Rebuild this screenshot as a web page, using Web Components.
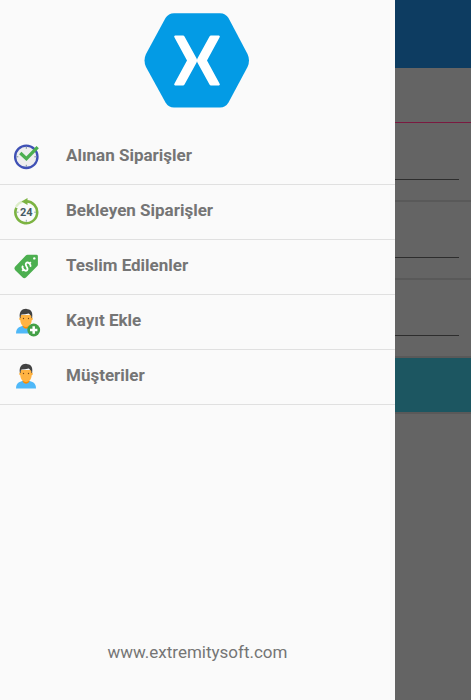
<!DOCTYPE html>
<html lang="tr">
<head>
<meta charset="utf-8">
<meta name="viewport" content="width=device-width, initial-scale=1">
<title>Siparişler</title>
<style>
  body { margin: 0; background: #646464; font-family: Roboto, "Liberation Sans", sans-serif; color: #757575; }
</style>
</head>
<body>
<app-shell>
  <order-page slot="page" inert></order-page>
  <nav-drawer slot="drawer">
    <brand-logo slot="header"></brand-logo>
    <drawer-item icon="clock">Alınan Siparişler</drawer-item>
    <drawer-item icon="day">Bekleyen Siparişler</drawer-item>
    <drawer-item icon="tag">Teslim Edilenler</drawer-item>
    <drawer-item icon="add">Kayıt Ekle</drawer-item>
    <drawer-item icon="person">Müşteriler</drawer-item>
    <site-link slot="footer">www.extremitysoft.com</site-link>
  </nav-drawer>
</app-shell>

<script>
const define = (name, html) => customElements.define(name, class extends HTMLElement {
  constructor() {
    super();
    this.attachShadow({ mode: "open" }).innerHTML = html;
  }
});

/* The drawer shares one grid cell with the dimmed page and leaves a strip of it free. */
define("app-shell", `
  <style>
    :host { display: grid; min-height: 100vh; }
    ::slotted(*) { grid-area: 1 / 1; }
    ::slotted([slot="drawer"]) { margin-right: 76px; z-index: 1; }
  </style>
  <slot name="page"></slot><slot name="drawer"></slot>`);

define("form-row", `
  <style>
    :host { display: flex; align-items: flex-end; box-sizing: border-box; height: 78px; padding: 0 12px 20px; border-bottom: 2px solid #595959; }
    input { flex: 1; min-width: 0; height: 36px; padding: 0; border: 0; border-bottom: 1px solid #2d2d2d; border-radius: 0; background: none; font: inherit; }
  </style>
  <input type="text" aria-label="Bilgi">`);

define("order-page", `
  <style>
    :host { display: block; background: #646464; }
    header { height: 68px; background: #0d3c61; }
    .tabs { height: 54px; border-bottom: 1px solid #7a1a40; margin-bottom: 1px; }
    button { display: block; width: 100%; height: 54px; border: 0; padding: 0; background: #1c5661; }
    .action { border-bottom: 2px solid #595959; }
  </style>
  <header></header>
  <div class="tabs"></div>
  <form-row></form-row><form-row></form-row><form-row></form-row>
  <div class="action"><button type="button" aria-label="Kaydet"></button></div>`);

define("nav-drawer", `
  <style>
    :host { display: flex; flex-direction: column; background: #fafafa; }
    header { display: flex; justify-content: center; padding: 12px 0 21px; }
    nav { flex: 1; }
    footer { display: flex; justify-content: center; padding: 36px 0; }
  </style>
  <header><slot name="header"></slot></header>
  <nav><slot></slot></nav>
  <footer><slot name="footer"></slot></footer>`);

define("brand-logo", `
  <style>:host, svg { display: block; }</style>
  <svg width="108" height="97" viewBox="0 0 108 97" aria-hidden="true">
    <path fill="#039be5" d="M30 1.300H76Q81.500 1.300 84.500 6L103.500 42Q106.500 48.500 103.500 55L84.500 90.500Q81.500 95.600 76 95.600H30Q24.500 95.600 21.500 90.500L2 55Q-1 48.500 2 42L21.500 6Q24.500 1.300 30 1.300Z"/>
    <path fill="#fff" d="M31 23.500H39Q40 23.500 40.500 24.500L52.600 46.500L53 47.700L53.400 46.500L65.500 24.500Q66 23.500 67 23.500H75Q76.500 24 75.500 25.500L63 48.500L75.500 71.500Q76.500 73 75 73.500H67Q66 73.500 65.500 72.500L53.400 50.500L53 49.300L52.600 50.500L40.500 72.500Q40 73.500 39 73.500H31Q29.500 73 30.500 71.500L43 48.500L30.500 25.500Q29.500 24 31 23.500Z"/>
  </svg>`);

define("site-link", `
  <style>
    :host { display: block; }
    a { color: inherit; text-decoration: none; font-size: 17px; line-height: 24px; }
  </style>
  <a href="#site"><slot></slot></a>`);

const person = `
  <path fill="#4fb8f8" d="M3 25.500C3 20.500 6 18.700 10 17.800H16C20 18.700 23 20.500 23 25.500Z"/>
  <path fill="#fb8c00" d="M9.800 15.500H16.200V19Q13 22.500 9.800 19Z"/>
  <ellipse cx="7.300" cy="10.800" rx="1" ry="1.500" fill="#ffa726"/><ellipse cx="18.700" cy="10.800" rx="1" ry="1.500" fill="#ffa726"/>
  <path fill="#ffb342" d="M7.300 7H18.700V12C18.500 16 16.500 18.800 13 18.900C9.500 18.800 7.500 16 7.300 12Z"/>
  <path fill="#424242" d="M6.800 9.500C6 3.800 8.800 .8 13 .7L14.800 1.200C18.300 1.500 19.900 4.500 19.200 9.500L18.300 10.300V8L15.800 5.400Q12 6.500 8.500 6.500L7.700 8V10.300Z"/>
  <circle cx="10.500" cy="10.500" r=".65" fill="#784719"/><circle cx="15.500" cy="10.500" r=".65" fill="#784719"/>`;

const icons = {
  clock: `
    <circle cx="13.300" cy="13.800" r="11.200" fill="#eee" stroke="#3f51b5" stroke-width="2.300"/>
    <path d="M13.300 3.800V5.800M13.300 21.800V23.800M3.300 13.800H5.300M21.300 13.800H23.300" stroke="#78909c" stroke-width="1"/>
    <path d="M7.300 10L13.400 15.700L24.700 4.200" fill="none" stroke="#4caf50" stroke-width="3.300"/>`,
  day: `
    <path d="M3 8.800A11.200 11.200 0 0 1 10 3.500" fill="none" stroke="#dcedc8" stroke-width="2.300"/>
    <path d="M13.300 3.400A10.900 10.900 0 1 1 3.400 9.700" fill="none" stroke="#7cb342" stroke-width="2.600"/>
    <path fill="#7cb342" d="M8.500 3.500L14.500 0V7Z"/>
    <path d="M3.700 14.200H5.500M21.200 14.200H23M13.300 21.800V23.800" stroke="#90a4ae" stroke-width="1"/>
    <text x="13.300" y="17.900" text-anchor="middle" font-size="11" font-weight="700" fill="#455a64">24</text>`,
  tag: `
    <path fill="#4caf50" d="M14.500 1.800H23.500Q24.900 1.800 24.900 3.200V11.500Q24.900 12.500 24.100 13.300L13 24.600Q11.200 26 9.700 24.600L2 17Q.7 15.300 2 13.800L12.800 2.500Q13.500 1.800 14.500 1.800Z"/>
    <circle cx="21.300" cy="5.400" r="1.200" fill="#fff"/>
    <g transform="rotate(45 13.500 13.500)"><path d="M16.500 11Q16 9.300 13.600 9.300Q10.800 9.400 10.800 11.300Q10.900 12.800 13.500 13.400Q16.500 14 16.500 15.800Q16.300 17.700 13.500 17.700Q10.900 17.700 10.500 15.600M13.500 7.400V9.300M13.500 17.700V19.600" fill="none" stroke="#fff" stroke-width="1.800"/></g>`,
  person,
  add: person + `
    <circle cx="20.700" cy="22" r="6.400" fill="#43a047"/>
    <path d="M20.700 18.300V25.700M17 22H24.400" stroke="#fff" stroke-width="2.500"/>`
};

customElements.define("drawer-item", class extends HTMLElement {
  connectedCallback() {
    if (this.shadowRoot) return;
    this.attachShadow({ mode: "open" }).innerHTML = `
      <style>
        :host { display: block; border-bottom: 1px solid #e0e0e0; }
        a { display: grid; grid-template-columns: 28px 1fr; column-gap: 25px; height: 54px; padding: 13px 0 0 13px; box-sizing: border-box; color: inherit; text-decoration: none; }
        svg { display: block; }
        span { font-size: 17px; line-height: 24px; font-weight: 700; }
      </style>
      <a href="#${this.getAttribute("icon")}">
        <svg width="28" height="29" viewBox="0 0 28 29" aria-hidden="true">${icons[this.getAttribute("icon")]}</svg>
        <span><slot></slot></span>
      </a>`;
  }
});
</script>
</body>
</html>
